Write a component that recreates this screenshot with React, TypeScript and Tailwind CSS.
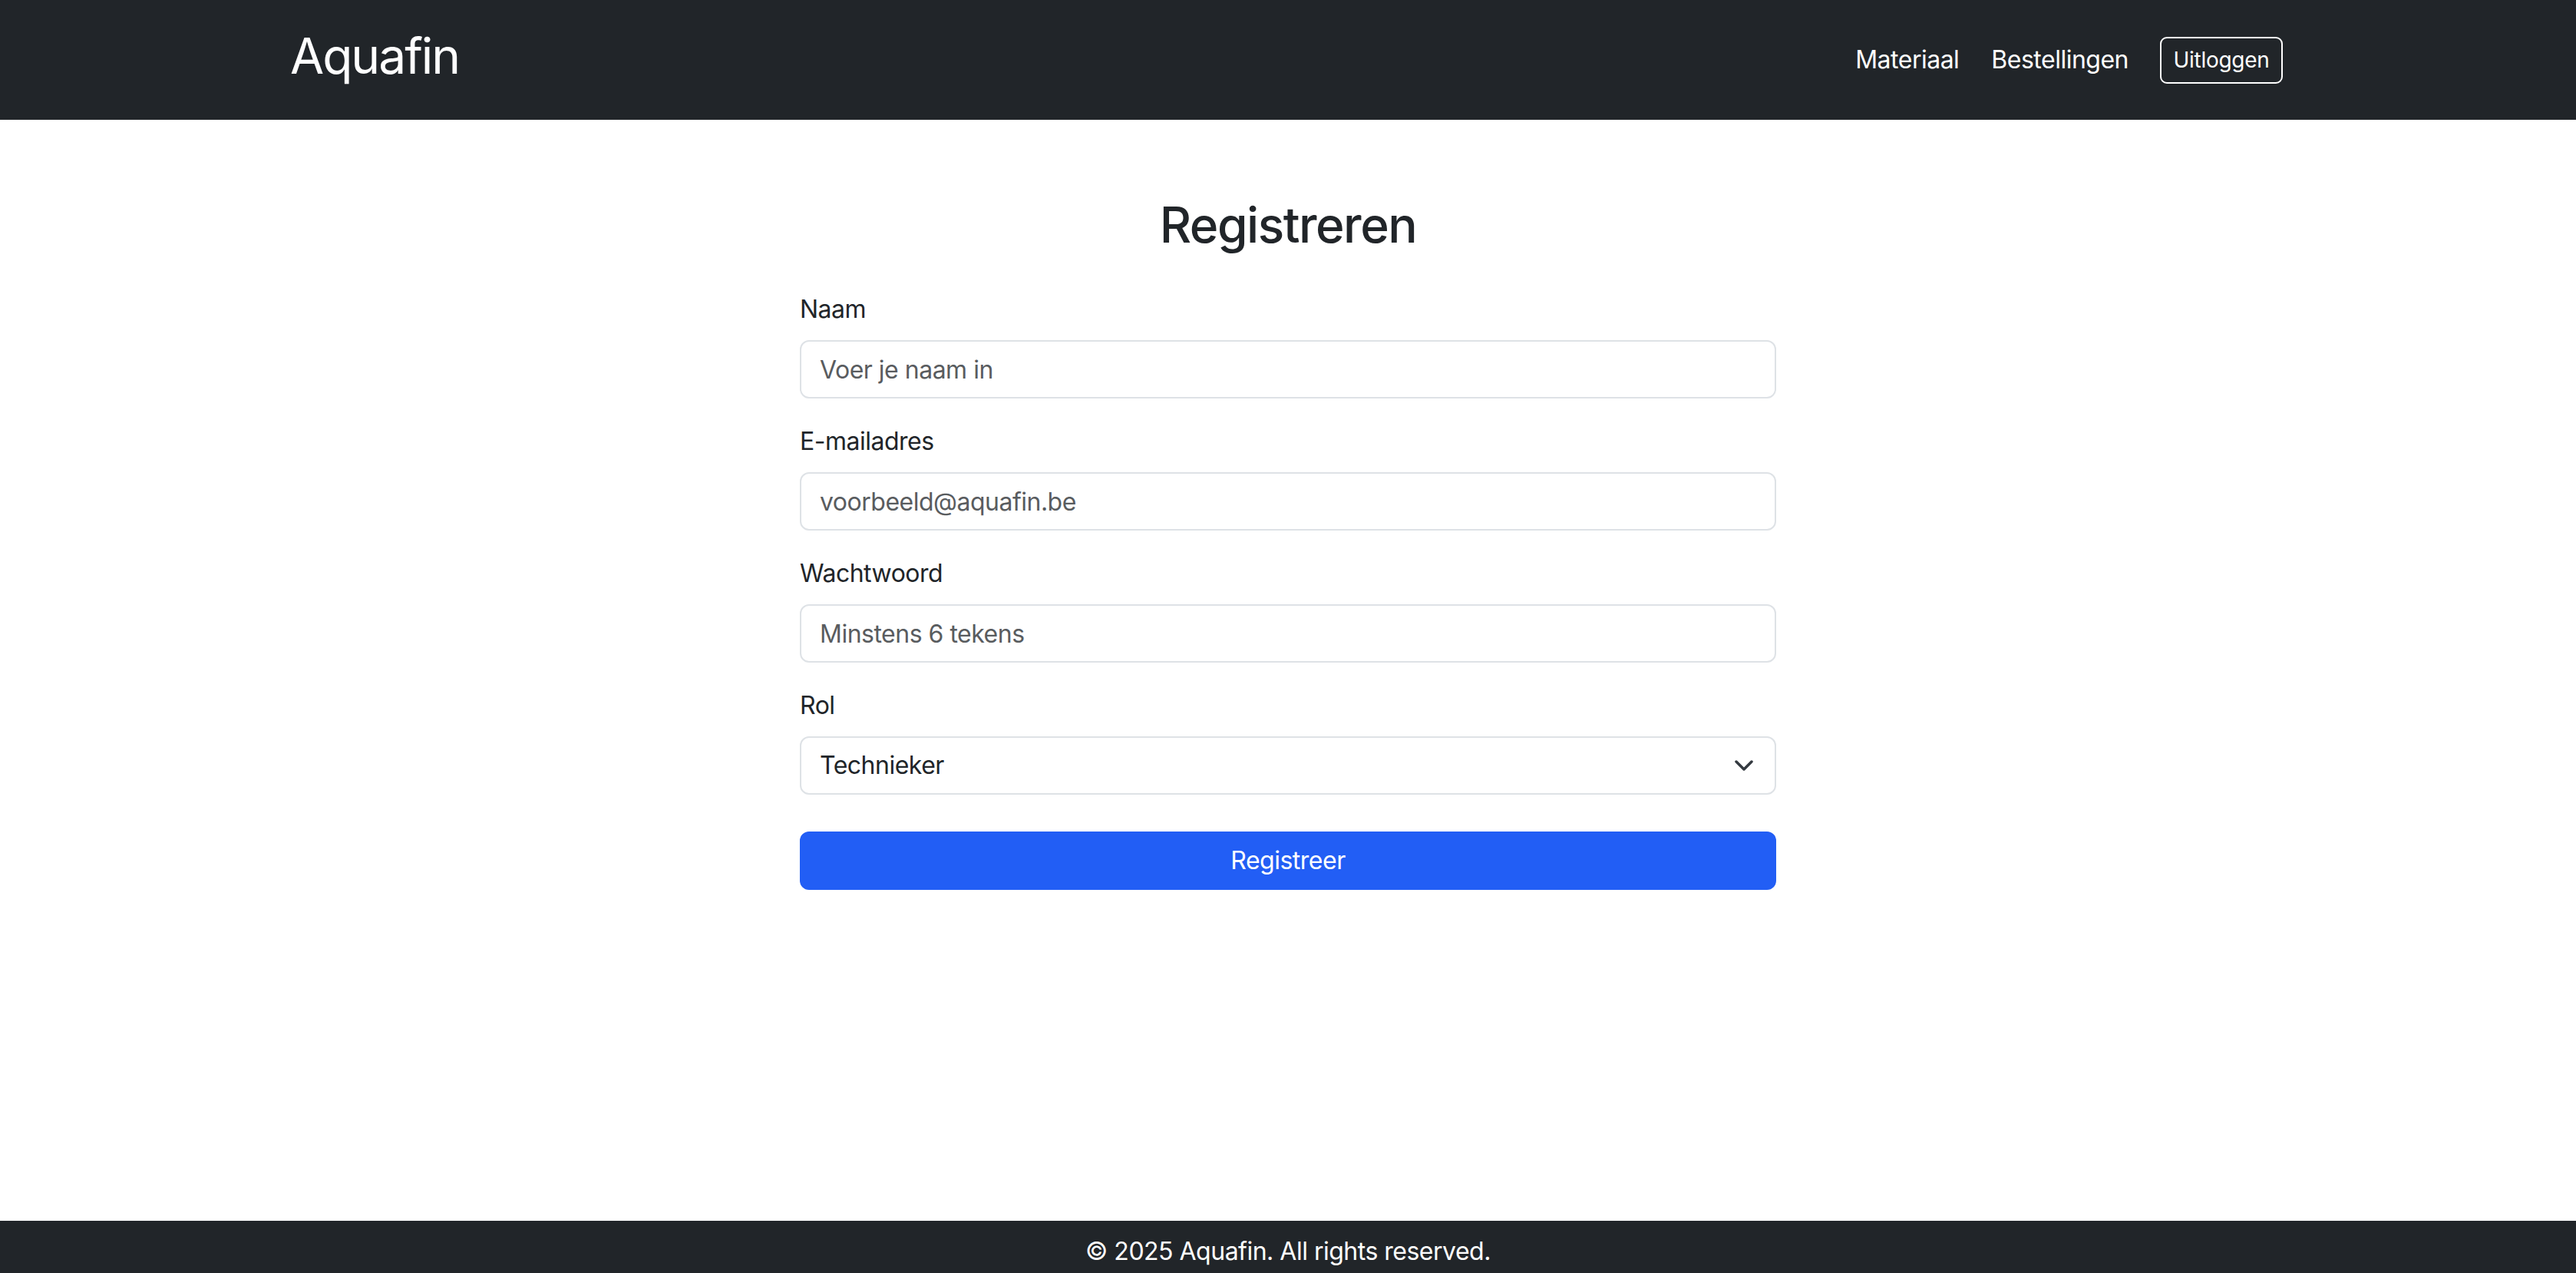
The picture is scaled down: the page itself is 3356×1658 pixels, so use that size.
import { useState } from 'react';

export default function App() {
  const [naam, setNaam] = useState('');
  const [email, setEmail] = useState('');
  const [wachtwoord, setWachtwoord] = useState('');
  const [rol, setRol] = useState('technieker');

  return (
    <div className="min-h-screen flex flex-col bg-white text-[#212529] font-['Inter','Liberation_Sans',sans-serif]">
      <nav className="h-[156px] shrink-0 bg-[#212529]">
        <div className="mx-auto w-[2640px] h-full px-[24px] flex items-center justify-between">
          <a href="#" className="-ml-[4px] text-[64px] leading-none text-white tracking-[-2px] -mt-[10px]">
            Aquafin
          </a>

          <div className="flex items-center">
            <div className="flex items-center gap-[42px]">
              <a href="#" className="text-[32px] leading-[48px] text-white tracking-[-0.5px]">
                Materiaal
              </a>
              <a href="#" className="text-[32px] leading-[48px] text-white tracking-[-0.5px]">
                Bestellingen
              </a>
            </div>
            <button className="ml-[41px] w-[160px] h-[61px] border-2 border-white rounded-[9px] text-[28px] text-white tracking-[-0.3px]">
              Uitloggen
            </button>
          </div>
        </div>
      </nav>

      <main className="flex-1">
        <div className="mx-auto w-[1272px] pt-[98px]">
          <h2 className="text-[64px] leading-[77px] font-medium text-center mb-[48px] tracking-[-1.5px]">
            Registreren
          </h2>

          <form onSubmit={(e) => e.preventDefault()}>
            <div className="mb-[32px]">
              <label className="block text-[32px] leading-[48px] mb-[16px] tracking-[-0.5px]">Naam</label>
              <input
                type="text"
                value={naam}
                onChange={(e) => setNaam(e.target.value)}
                placeholder="Voer je naam in"
                className="block w-full h-[76px] px-[24px] border-2 border-[#dee2e6] rounded-[12px] text-[32px] tracking-[-0.5px] outline-none placeholder:text-[#595c5f]"
              />
            </div>

            <div className="mb-[32px]">
              <label className="block text-[32px] leading-[48px] mb-[16px] tracking-[-0.5px]">E-mailadres</label>
              <input
                type="email"
                value={email}
                onChange={(e) => setEmail(e.target.value)}
                placeholder="voorbeeld@aquafin.be"
                className="block w-full h-[76px] px-[24px] border-2 border-[#dee2e6] rounded-[12px] text-[32px] tracking-[-0.5px] outline-none placeholder:text-[#595c5f]"
              />
            </div>

            <div className="mb-[32px]">
              <label className="block text-[32px] leading-[48px] mb-[16px] tracking-[-0.5px]">Wachtwoord</label>
              <input
                type="password"
                value={wachtwoord}
                onChange={(e) => setWachtwoord(e.target.value)}
                placeholder="Minstens 6 tekens"
                className="block w-full h-[76px] px-[24px] border-2 border-[#dee2e6] rounded-[12px] text-[32px] tracking-[-0.5px] outline-none placeholder:text-[#595c5f]"
              />
            </div>

            <div className="mb-[32px]">
              <label className="block text-[32px] leading-[48px] mb-[16px] tracking-[-0.5px]">Rol</label>
              <div className="relative">
                <select
                  value={rol}
                  onChange={(e) => setRol(e.target.value)}
                  className="block w-full h-[76px] px-[24px] border-2 border-[#dee2e6] rounded-[12px] text-[32px] tracking-[-0.5px] bg-white text-[#212529] appearance-none outline-none"
                >
                  <option value="technieker">Technieker</option>
                  <option value="magazijnier">Magazijnier</option>
                  <option value="admin">Admin</option>
                </select>
                <svg
                  className="absolute right-[30px] top-1/2 -translate-y-1/2 pointer-events-none"
                  width="24"
                  height="14"
                  viewBox="0 0 24 14"
                  fill="none"
                >
                  <path d="M2 2l10 10 10-10" stroke="#343a40" strokeWidth="3.5" strokeLinecap="round" strokeLinejoin="round" />
                </svg>
              </div>
            </div>

            <button
              type="submit"
              className="mt-[16px] w-full h-[76px] rounded-[12px] bg-[#225ef5] text-white text-[32px] tracking-[-0.5px]"
            >
              Registreer
            </button>
          </form>
        </div>
      </main>

      <footer className="h-[68px] shrink-0 bg-[#212529] text-white text-center text-[32px] leading-[48px] pt-[16px] tracking-[-0.5px]">
        © 2025 Aquafin. All rights reserved.
      </footer>
    </div>
  );
}
